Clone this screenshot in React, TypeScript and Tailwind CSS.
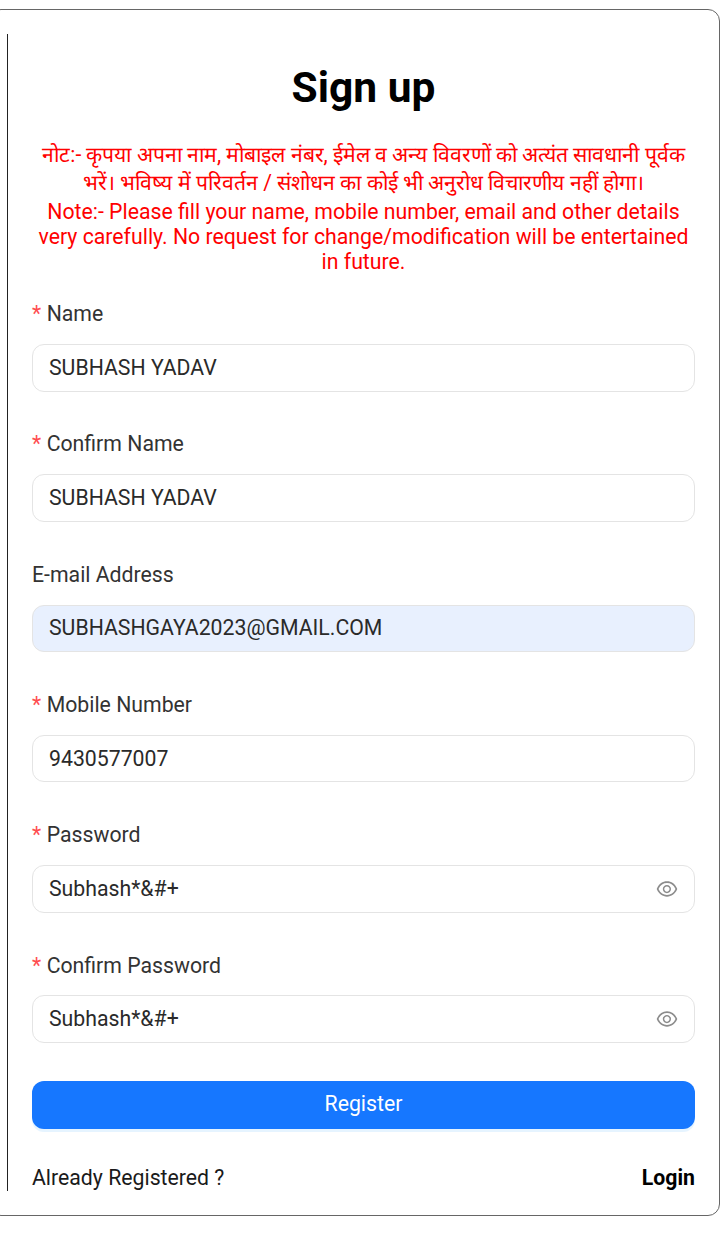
import { AiOutlineEye } from "react-icons/ai";

const fields = [
  { label: "Name", value: "SUBHASH YADAV", required: true },
  { label: "Confirm Name", value: "SUBHASH YADAV", required: true },
  { label: "E-mail Address", value: "SUBHASHGAYA2023@GMAIL.COM", autofill: true },
  { label: "Mobile Number", value: "9430577007", required: true },
  { label: "Password", value: "Subhash*&#+", required: true, eye: true },
  { label: "Confirm Password", value: "Subhash*&#+", required: true, eye: true },
];

function Field({ label, value, required, autofill, eye }: { label: string; value: string; required?: boolean; autofill?: boolean; eye?: boolean }) {
  return (
    <div className="mb-[37.8px]">
      <label className="flex h-[30px] items-center text-[21.25px] text-[#333333]">
        {required && <span className="mr-[5.5px] text-[#ff4d4f]">*</span>}
        {label}
      </label>
      <div
        className={`mt-[15px] flex h-[47.5px] items-center rounded-[12px] border border-[#e4e4e4] pl-[16px] pr-[15px] text-[21.25px] text-[#2a2a2a] ${
          autofill ? "bg-[#e8f0fe]" : "bg-white"
        }`}
      >
        <span className="flex-1">{value}</span>
        {eye && <AiOutlineEye className="h-[24px] w-[24px] text-[#8c8c8c]" />}
      </div>
    </div>
  );
}

export default function App() {
  return (
    <div className="h-[1250px] overflow-hidden bg-white pt-[9px] font-['Roboto',sans-serif]">
      <div className="ml-[-11px] h-[1207px] w-[731px] rounded-[12px] border border-[#666666] pt-[24px]">
        <div className="ml-[17px] h-[1157px] w-[688px] border-l border-[#222222] pl-[24px]">
          <h1 className="pt-[28px] text-center text-[42.5px] leading-[52px] font-bold text-black">Sign up</h1>
          <div className="mt-[27px] text-center leading-[25px] text-[#ff0000]">
            <p className="text-[21.15px] leading-[27.5px]">
              नोट:- कृपया अपना नाम, मोबाइल नंबर, ईमेल व अन्य विवरणों को अत्यंत सावधानी पूर्वक भरें। भविष्य में परिवर्तन / संशोधन का कोई भी अनुरोध विचारणीय नहीं होगा।
            </p>
            <p className="mt-[3px] text-[21.26px]">
              Note:- Please fill your name, mobile number, email and other details very carefully. No request for change/modification will be entertained in future.
            </p>
          </div>
          <form className="mt-[25px]">
            {fields.map((field) => (
              <Field key={field.label} {...field} />
            ))}
            <button type="button" className="block h-[48.5px] w-full rounded-[12px] bg-[#1677ff] pb-[2px] text-[21.25px] text-white shadow-[0_3px_0_rgba(5,145,255,0.1)]">
              Register
            </button>
            <div className="mt-[32.5px] flex items-center justify-between text-[21.25px] leading-[31px] text-[#1a1a1a]">
              <span>Already Registered ?</span>
              <span className="font-bold text-black">Login</span>
            </div>
          </form>
        </div>
      </div>
    </div>
  );
}
